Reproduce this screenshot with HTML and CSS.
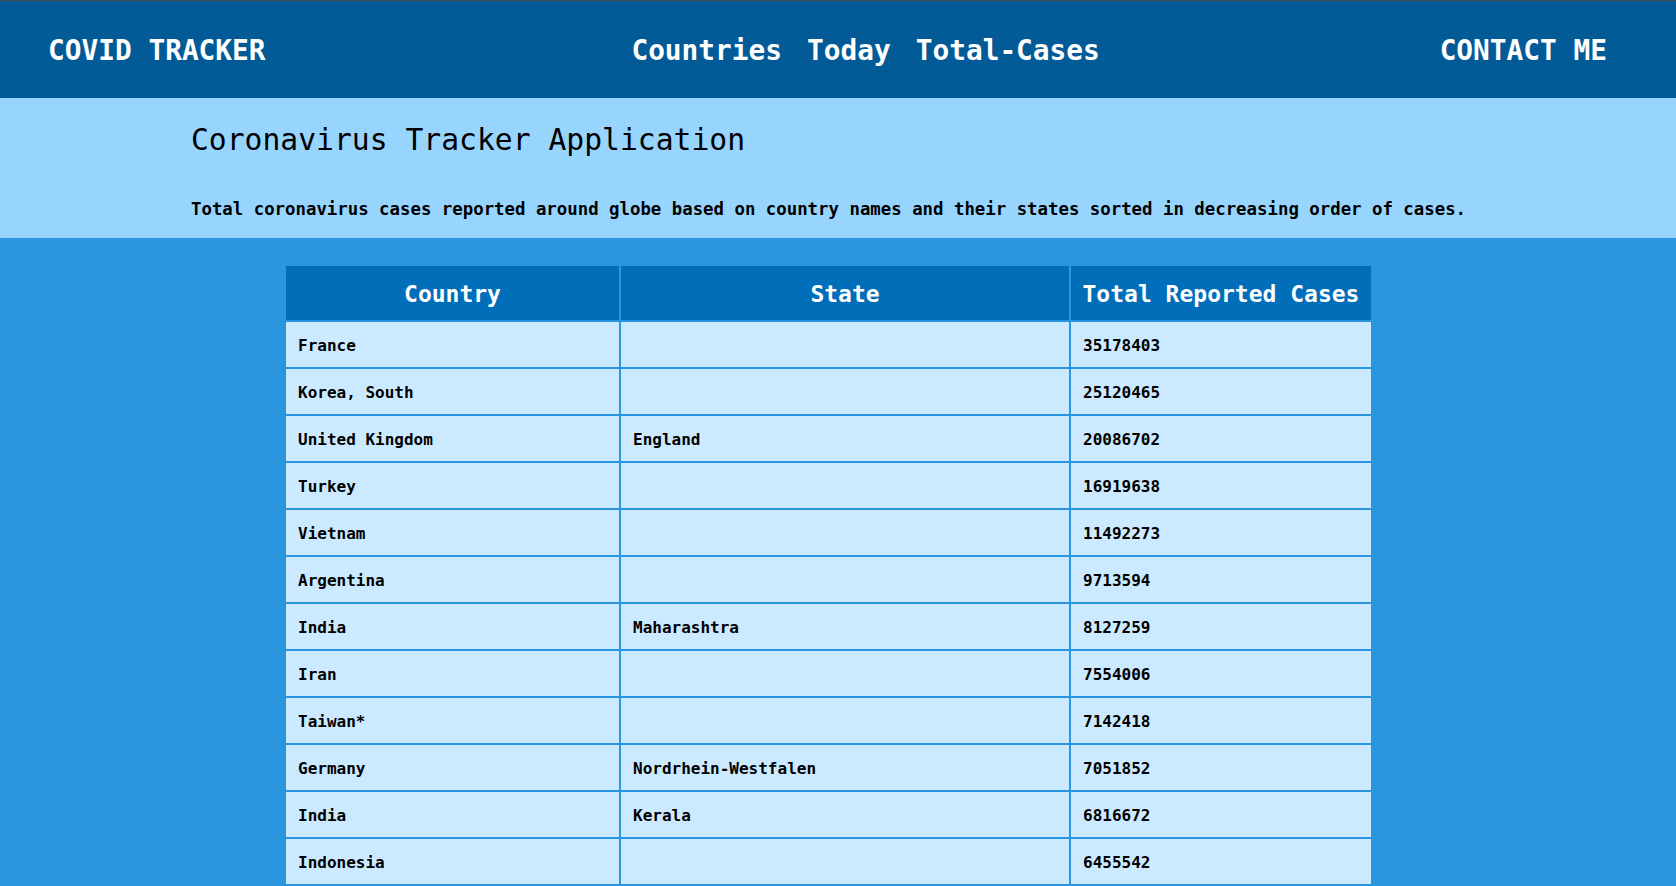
FILE: index.html
```html
<!DOCTYPE html>
<html lang="en">
<head>
<meta charset="utf-8">
<title>Coronavirus Tracker Application</title>
<link rel="stylesheet" href="styles.css">
</head>
<body>
<header class="topbar">
  <a class="brand" href="#">COVID TRACKER</a>
  <nav class="menu">
    <a href="#">Countries</a>
    <a href="#">Today</a>
    <a href="#">Total-Cases</a>
  </nav>
  <a class="contact" href="#">CONTACT ME</a>
</header>
<section class="intro">
  <h1 class="intro-title">Coronavirus Tracker Application</h1>
  <p class="intro-text">Total coronavirus cases reported around globe based on country names and their states sorted in decreasing order of cases.</p>
</section>
<main class="content">
  <table class="cases">
    <colgroup>
      <col class="col-country">
      <col class="col-state">
      <col class="col-total">
    </colgroup>
    <thead>
      <tr><th>Country</th><th>State</th><th>Total Reported Cases</th></tr>
    </thead>
    <tbody>
      <tr><td>France</td><td></td><td>35178403</td></tr>
      <tr><td>Korea, South</td><td></td><td>25120465</td></tr>
      <tr><td>United Kingdom</td><td>England</td><td>20086702</td></tr>
      <tr><td>Turkey</td><td></td><td>16919638</td></tr>
      <tr><td>Vietnam</td><td></td><td>11492273</td></tr>
      <tr><td>Argentina</td><td></td><td>9713594</td></tr>
      <tr><td>India</td><td>Maharashtra</td><td>8127259</td></tr>
      <tr><td>Iran</td><td></td><td>7554006</td></tr>
      <tr><td>Taiwan*</td><td></td><td>7142418</td></tr>
      <tr><td>Germany</td><td>Nordrhein-Westfalen</td><td>7051852</td></tr>
      <tr><td>India</td><td>Kerala</td><td>6816672</td></tr>
      <tr><td>Indonesia</td><td></td><td>6455542</td></tr>
    </tbody>
  </table>
</main>
</body>
</html>
```
FILE: styles.css
```css
* { box-sizing: border-box; }

html, body {
  margin: 0;
  padding: 0;
}

body {
  background: #2a96de;
  font-family: "DejaVu Sans Mono", "Liberation Mono", monospace;
  color: #000;
}

.topbar {
  height: 98px;
  border-top: 1px solid #4d4d4d;
  background: #025b97;
  display: flex;
  align-items: center;
  justify-content: space-between;
  padding: 2px 69px 0 48px;
}

.topbar a {
  color: #fff;
  text-decoration: none;
  font-weight: bold;
  font-size: 27.8px;
  line-height: 32px;
}

.menu {
  display: flex;
  gap: 25px;
  margin-left: 26px;
}

.intro {
  background: #97d5ff;
  padding: 24px 0 18px 191px;
}

.intro-title {
  margin: 0;
  font-size: 29.7px;
  line-height: 36px;
  font-weight: normal;
}

.intro-text {
  margin: 40px 0 0;
  font-size: 17.36px;
  line-height: 22px;
  font-weight: bold;
}

.content {
  padding: 26px 0 0 284px;
}

.cases {
  width: 1089px;
  table-layout: fixed;
  border-collapse: separate;
  border-spacing: 2px;
}

.col-country { width: 333px; }
.col-state { width: 448px; }
.col-total { width: 300px; }

.cases th {
  background: #006eb8;
  color: #fff;
  font-size: 23px;
  line-height: 28px;
  font-weight: bold;
  text-align: center;
  padding: 14px 8px 12px;
  white-space: nowrap;
}

.cases td {
  background: #cceaff;
  font-size: 16px;
  line-height: 21px;
  font-weight: bold;
  padding: 13px 12px 11px;
  height: 45px;
}
```
